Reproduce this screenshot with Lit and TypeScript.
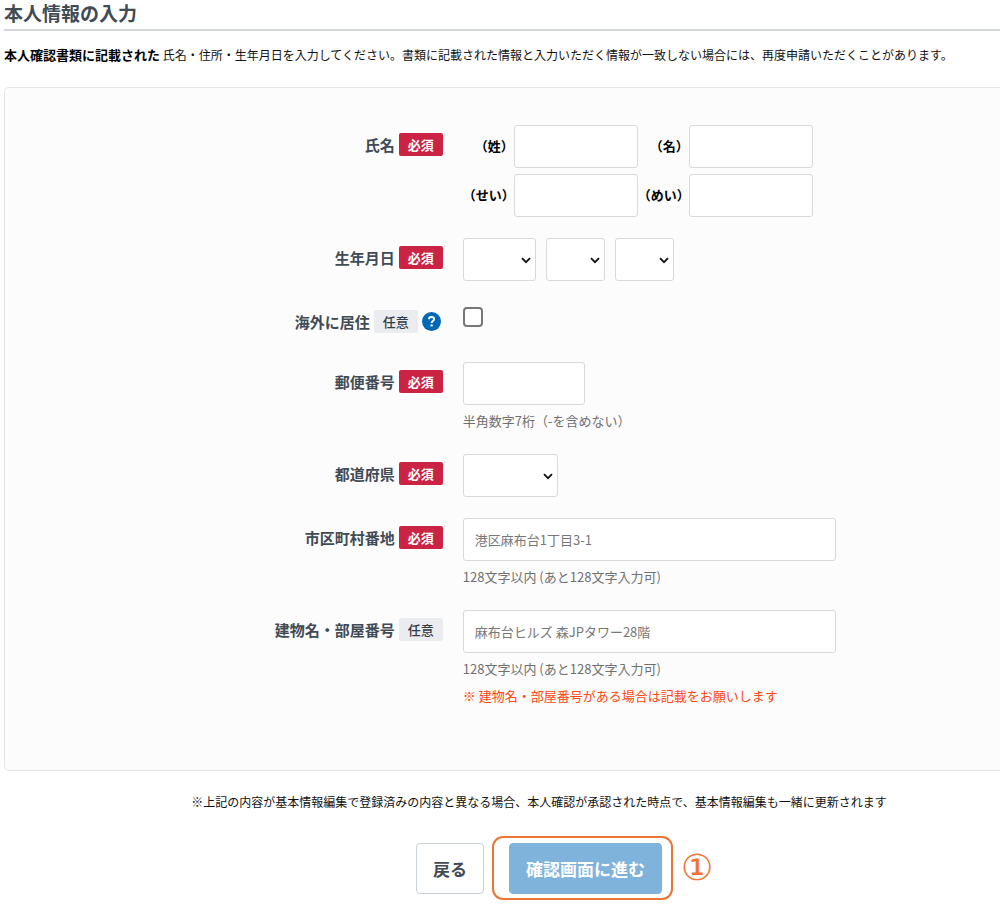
import { LitElement, html, css, nothing } from "lit";
import { customElement, property } from "lit/decorators.js";

const jpFont = css`"Noto Sans CJK JP", "Noto Sans", sans-serif`;

/** One row of the form: caption and badge on the left, controls on the right. */
@customElement("form-row")
class FormRow extends LitElement {
  @property() caption = "";
  @property({ type: Boolean }) required = false;
  @property({ type: Boolean }) help = false;

  static styles = css`
    :host {
      display: grid;
      grid-template-columns: 44% minmax(0, 1fr);
      column-gap: 20px;
      align-items: start;
      font-family: ${jpFont};
    }
    .caption {
      display: flex;
      justify-content: flex-end;
      align-items: center;
      gap: 4px;
      padding-top: 8px;
      font-size: 15px;
      line-height: 23px;
      font-weight: 700;
      color: #414b55;
      white-space: nowrap;
    }
    .badge {
      padding: 0 9px;
      border-radius: 2px;
      font-size: 13px;
      line-height: 23px;
      font-weight: 500;
      color: #323c46;
      background: #ebecf0;
    }
    .badge.required {
      background: #cb2343;
      color: #fff;
      font-weight: 700;
    }
    .help {
      display: block;
      width: 19px;
      height: 19px;
      padding: 0;
      margin-right: 2px;
      border: 0;
      border-radius: 50%;
      background: #0068b7;
    }
    .help svg {
      display: block;
    }
  `;

  render() {
    return html`
      <div class="caption">
        <span>${this.caption}</span>
        <span class="badge ${this.required ? "required" : ""}">${this.required ? "必須" : "任意"}</span>
        ${this.help
          ? html`<button class="help" type="button" aria-label="ヘルプ">
              <svg width="19" height="19" viewBox="0 0 19 19" fill="none">
                <path d="M6.9 7.2C7 5.7 8 5 9.5 5c1.5 0 2.6.9 2.6 2.2 0 1.8-2.5 1.9-2.5 3.8" stroke="#fff" stroke-width="1.9" />
                <circle cx="9.6" cy="13.4" r="1.2" fill="#fff" />
              </svg>
            </button>`
          : nothing}
      </div>
      <div><slot></slot></div>
    `;
  }
}

@customElement("app-root")
class AppRoot extends LitElement {
  static styles = css`
    :host {
      display: block;
      padding-left: 4px;
      font-family: ${jpFont};
      color: #111;
      background: #fff;
    }
    * {
      box-sizing: border-box;
    }
    h1 {
      margin: 0;
      height: 31px;
      border-bottom: 2px solid #d3d7dd;
      font-size: 19px;
      line-height: 26px;
      font-weight: 700;
      color: #414b55;
    }
    .intro {
      margin: 0;
      padding: 14px 0 22px;
      font-size: 12px;
      line-height: 20px;
    }
    .intro strong {
      font-size: 13px;
      color: #000;
    }
    .panel {
      display: flex;
      flex-direction: column;
      gap: 21px;
      padding: 37px 0 63px;
      border: 1px solid #e6e6e6;
      border-right: 0;
      border-radius: 5px 0 0 5px;
      background: #fcfcfc;
    }
    input,
    select {
      height: 43px;
      margin: 0;
      border: 1px solid #d9d9d9;
      border-radius: 3px;
      background: #fff;
      font-family: inherit;
      font-size: 13px;
      color: #111;
    }
    input {
      display: block;
      padding: 0 11px;
    }
    input::placeholder {
      color: #777;
      opacity: 1;
    }
    select {
      appearance: none;
      padding: 0 18px 0 8px;
      background: #fff
        url("data:image/svg+xml,%3Csvg xmlns='http://www.w3.org/2000/svg' width='10' height='7' fill='none'%3E%3Cpath d='M1 1.2l4 4 4-4' stroke='%23111' stroke-width='1.8'/%3E%3C/svg%3E")
        no-repeat right 4px top 18px;
    }
    .names {
      display: grid;
      grid-template-columns: 51px 124px 51px 124px;
      row-gap: 6px;
      align-items: center;
    }
    .names label {
      padding-bottom: 2px;
      font-size: 13px;
      font-weight: 700;
      line-height: 20px;
      text-align: right;
      white-space: nowrap;
      color: #000;
    }
    .names input {
      width: 100%;
    }
    .dates {
      display: flex;
      gap: 10px;
    }
    .year {
      width: 73px;
    }
    .day {
      width: 59px;
    }
    .check {
      height: 39px;
      padding-top: 5px;
    }
    .check input {
      width: 20px;
      height: 20px;
      appearance: none;
      padding: 0;
      border: 2px solid #777;
      border-radius: 4px;
    }
    .check input:checked {
      background: #0068b7;
    }
    .zip {
      width: 122px;
    }
    .pref {
      display: block;
      width: 95px;
    }
    .wide {
      width: 373px;
      max-width: 100%;
    }
    .hint,
    .notice {
      margin: 0;
      padding: 4px 0 1px;
      font-size: 13px;
      line-height: 23px;
      color: #707070;
    }
    .notice {
      padding: 3px 0 0;
      color: #ff4713;
    }
    footer {
      padding-left: 74px;
      text-align: center;
    }
    .remark {
      margin: 0;
      padding-top: 21px;
      font-size: 12px;
      line-height: 20px;
    }
    .actions {
      display: flex;
      justify-content: center;
      gap: 25px;
      padding: 31px 0 12px;
    }
    .actions button {
      display: block;
      height: 51px;
      padding: 0 16px;
      border: 1px solid #c9d0d6;
      border-radius: 4px;
      background: #fff;
      font-family: inherit;
      font-size: 17px;
      font-weight: 700;
      color: #414b55;
    }
    .marked {
      position: relative;
    }
    .actions .next {
      border-color: #80b3db;
      background: #80b3db;
      color: #fff;
    }
    .frame {
      position: absolute;
      inset: -7px -11px -6px -17px;
      border: 2px solid #ed7434;
      border-radius: 11px;
      pointer-events: none;
    }
    .step {
      position: absolute;
      left: calc(100% + 19px);
      top: 5px;
      font-family: "DejaVu Sans", ${jpFont};
      font-size: 36px;
      line-height: 40px;
      color: #ed7434;
    }
  `;

  private nameField(id: string, label: string) {
    return html`<label for=${id}>${label}</label><input id=${id} type="text" />`;
  }

  private dateField(cls: string, label: string) {
    return html`<select class=${cls} aria-label=${label}><option></option></select>`;
  }

  render() {
    return html`
      <h1>本人情報の入力</h1>
      <p class="intro"><strong>本人確認書類に記載された</strong> 氏名・住所・生年月日を入力してください。書類に記載された情報と入力いただく情報が一致しない場合には、再度申請いただくことがあります。</p>
      <form @submit=${(e: Event) => e.preventDefault()}>
        <div class="panel">
          <form-row caption="氏名" required>
            <div class="names">
              ${this.nameField("sei", "（姓）")}${this.nameField("mei", "（名）")}
              ${this.nameField("sei-kana", "（せい）")}${this.nameField("mei-kana", "（めい）")}
            </div>
          </form-row>
          <form-row caption="生年月日" required>
            <div class="dates">
              ${this.dateField("year", "年")}${this.dateField("day", "月")}${this.dateField("day", "日")}
            </div>
          </form-row>
          <form-row caption="海外に居住" help>
            <div class="check"><input type="checkbox" aria-label="海外に居住" /></div>
          </form-row>
          <form-row caption="郵便番号" required>
            <input class="zip" type="text" aria-label="郵便番号" />
            <p class="hint">半角数字7桁（-を含めない）</p>
          </form-row>
          <form-row caption="都道府県" required>
            <select class="pref" aria-label="都道府県"><option></option></select>
          </form-row>
          <form-row caption="市区町村番地" required>
            <input class="wide" type="text" aria-label="市区町村番地" placeholder="港区麻布台1丁目3-1" />
            <p class="hint">128文字以内 (あと128文字入力可)</p>
          </form-row>
          <form-row caption="建物名・部屋番号">
            <input class="wide" type="text" aria-label="建物名・部屋番号" placeholder="麻布台ヒルズ 森JPタワー28階" />
            <p class="hint">128文字以内 (あと128文字入力可)</p>
            <p class="notice">※ 建物名・部屋番号がある場合は記載をお願いします</p>
          </form-row>
        </div>
        <footer>
          <p class="remark">※上記の内容が基本情報編集で登録済みの内容と異なる場合、本人確認が承認された時点で、基本情報編集も一緒に更新されます</p>
          <div class="actions">
            <button type="button">戻る</button>
            <div class="marked">
              <button class="next" type="submit">確認画面に進む</button>
              <span class="frame"></span>
              <span class="step">①</span>
            </div>
          </div>
        </footer>
      </form>
    `;
  }
}
